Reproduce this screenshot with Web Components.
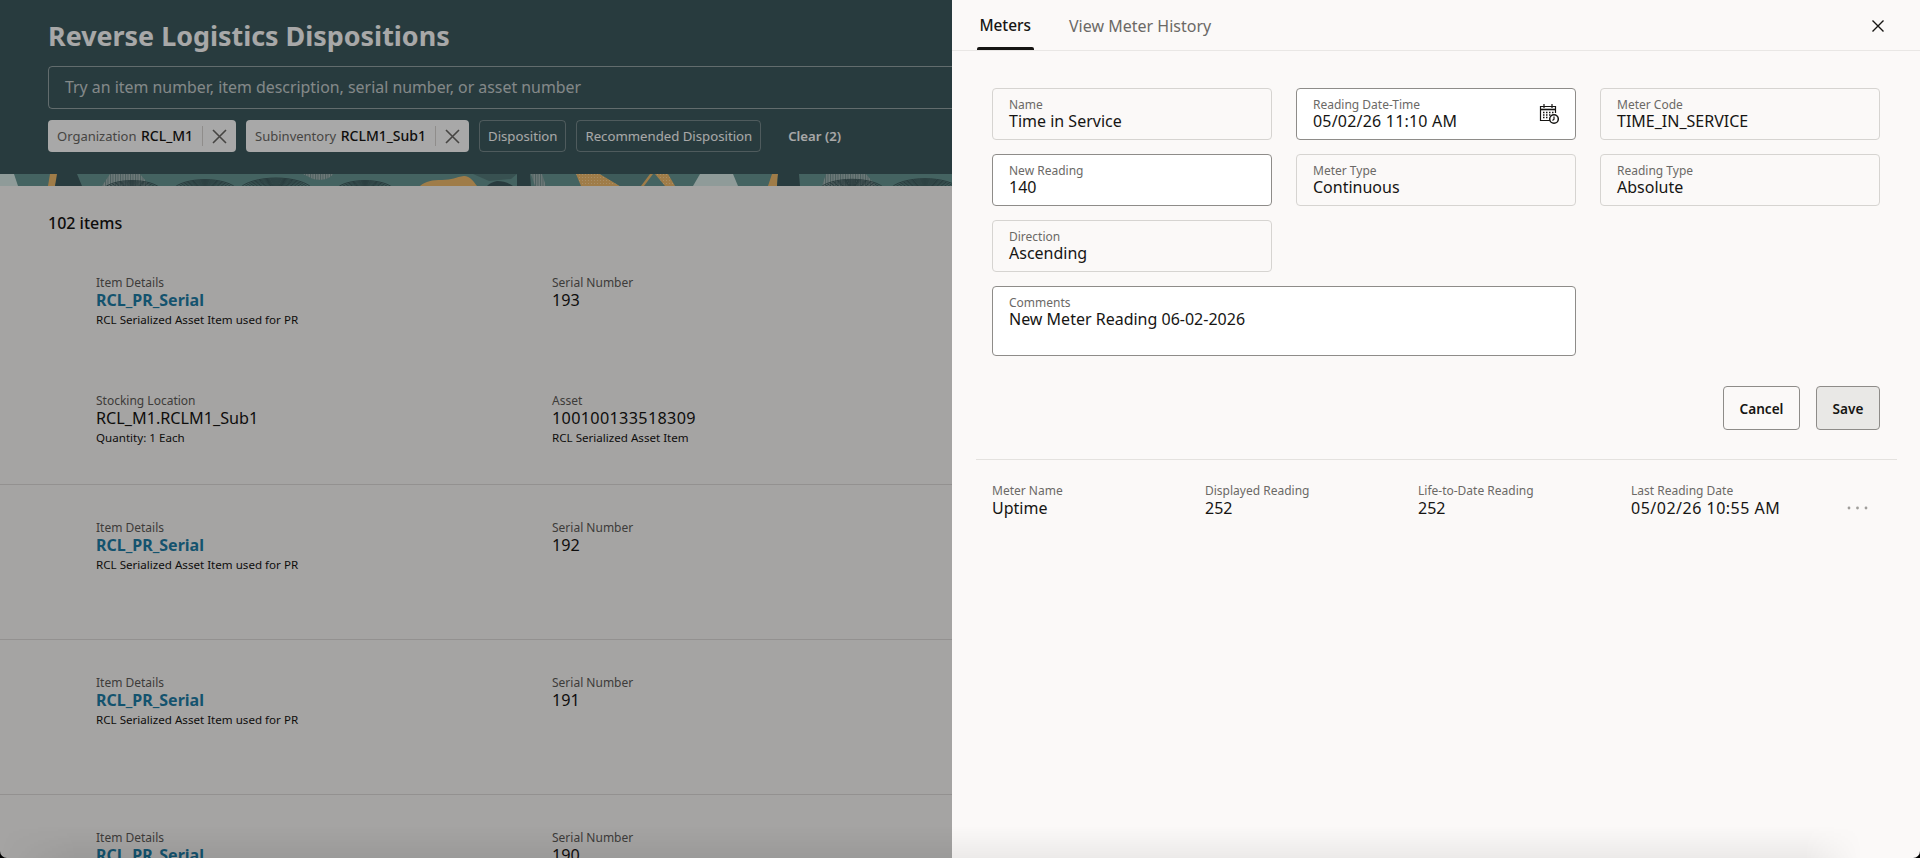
<!DOCTYPE html>
<html>
<head>
<meta charset="utf-8">
<title>Reverse Logistics Dispositions</title>
<style>
  html, body { margin: 0; height: 100%; overflow: hidden; }
  body { font-family: "Noto Sans", sans-serif; color: #161513; background: #fbf9f8; }
</style>
</head>
<body>
<rl-page></rl-page>
<rl-scrim></rl-scrim>
<rl-drawer></rl-drawer>
<rl-window-edge></rl-window-edge>

<script>
const FONT = '"Noto Sans", sans-serif';

class RlChip extends HTMLElement {
  connectedCallback() {
    this.attachShadow({ mode: 'open' });
    const label = this.getAttribute('label');
    const value = this.getAttribute('value');
    if (value) this.setAttribute('selected', '');
    this.shadowRoot.innerHTML = `
      <style>
        :host { display: inline-flex; align-items: center; height: 32px; box-sizing: border-box; border-radius: 4px; font-size: 13.2px; white-space: nowrap; padding-bottom: 1px; }
        :host([selected]) { background: #fff; padding-left: 9px; color: #161513; }
        :host(:not([selected])) { border: 1px solid rgba(255,255,255,.3); color: #fff; padding: 0 8px 1px; }
        .lab { color: #6b6966; margin-right: 4.5px; font-size: 13px; }
        .val { font-weight: 500; font-size: 14px; }
        .sep { width: 1px; height: 20px; background: #d9d7d4; margin: 1px 9px 0; }
        svg { display: block; margin: 1px 9px 0 0; }
      </style>
      ${value
        ? `<span class="lab">${label}</span><span class="val">${value}</span><span class="sep"></span>
           <svg width="15" height="15" viewBox="0 0 15 15" fill="none" stroke="#6b6966" stroke-width="1.6"><path d="M1 1l13 13M14 1L1 14"/></svg>`
        : `<span>${label}</span>`}
    `;
  }
}
customElements.define('rl-chip', RlChip);

// concentric finger print arcs of the banner art
function prints(cx, rx) {
  let d = '';
  for (let r = rx; r > 4; r -= 3.2) {
    d += `M${cx - r} 16C${cx - r * .7} ${16 - r * .42} ${cx + r * .7} ${16 - r * .42} ${cx + r} 16`;
  }
  return `<path d="${d}" fill="none" stroke="#3a5558" stroke-width=".9"/>`;
}

class RlBanner extends HTMLElement {
  connectedCallback() {
    this.attachShadow({ mode: 'open' });
    this.shadowRoot.innerHTML = `
      <style>
        :host { display: block; background: #3e5a5e; color: #fff; }
        .top { height: 174px; box-sizing: border-box; padding: 17px 0 0 48px; }
        h1 { margin: 0; font-size: 26.9px; line-height: 38px; font-weight: 700; }
        .search { margin-top: 11px; height: 43px; box-sizing: border-box; width: 1200px; border: 1px solid rgba(255,255,255,.45); border-radius: 4px; padding: 0 0 2px 16px; display: flex; align-items: center; font-size: 15.9px; color: rgba(255,255,255,.72); }
        .chips { margin-top: 11px; display: flex; gap: 10px; align-items: center; }
        .clear { margin-left: 17px; padding-bottom: 1px; font-size: 13.2px; font-weight: 600; color: #fff; }
        svg { display: block; }
      </style>
      <div class="top">
        <h1>Reverse Logistics Dispositions</h1>
        <div class="search">Try an item number, item description, serial number, or asset number</div>
        <div class="chips">
          <rl-chip label="Organization" value="RCL_M1"></rl-chip>
          <rl-chip label="Subinventory" value="RCLM1_Sub1"></rl-chip>
          <rl-chip label="Disposition"></rl-chip>
          <rl-chip label="Recommended Disposition"></rl-chip>
          <span class="clear">Clear (2)</span>
        </div>
      </div>
      <svg width="952" height="12" viewBox="0 0 952 12">
        <defs>
          <pattern id="hatch" width="2.5" height="3" patternUnits="userSpaceOnUse">
            <rect width="2.5" height="3" fill="#a9bab9"/><rect width="1" height="3" fill="#6f8f8e"/>
          </pattern>
          <pattern id="dots" width="3" height="3" patternUnits="userSpaceOnUse">
            <rect width="3" height="3" fill="#f2bd6e"/><rect width="1" height="1" fill="#ffd89c"/>
          </pattern>
        </defs>
        <rect width="952" height="12" fill="#689693"/>
        <path d="M0 0h14l4 12H0z" fill="#d9ebe8"/>
        <path d="M50 0h9l-4 12h-7z" fill="#f2bd6e"/>
        <path d="M57 0h20l5 12H55z" fill="#3e5a5e"/>
        <path d="M110 0h30l10 12h-48z" fill="url(#hatch)"/>
        ${prints(132, 30)}${prints(205, 33)}${prints(276, 38)}
        <path d="M303 0h30c-3 5-12 7-20 5z" fill="url(#hatch)"/>
        ${prints(365, 30)}
        <path d="M420 12c6-5 12-6 22-6 10 0 14-3 22-4 6 0 10 6 13 10z" fill="#f2bd6e"/>
        <path d="M473 0h44l-6 5-22 2z" fill="#557c7b"/>
        <path d="M487 12c3-3 6-4 10-5 6 0 12 2 16 5z" fill="#3e5a5e"/>
        <path d="M517 0h13l1 12h-14z" fill="#3e5a5e"/>
        <path d="M531 0h11l4 12h-11z" fill="url(#hatch)"/>
        <path d="M576 0h24l20 12h-39z" fill="url(#dots)"/>
        <path d="M600 0h50l-6 12h-24z" fill="#5f8b89"/>
        <path d="M650 0h3l-9 12h-3z" fill="#f2bd6e"/>
        <path d="M655 0h13l7 12h-10z" fill="url(#dots)"/>
        <path d="M700 0h33l5 12h-45z" fill="#d9ebe8"/>
        <path d="M772 0h6l-1 12h-9z" fill="#f2bd6e"/>
        <path d="M778 0h21l1 12h-23z" fill="#3e5a5e"/>
        <path d="M826 0h40l10 12h-54z" fill="url(#hatch)"/>
        ${prints(852, 34)}${prints(925, 36)}
      </svg>
    `;
  }
}
customElements.define('rl-banner', RlBanner);

class RlCell extends HTMLElement {
  connectedCallback() {
    this.attachShadow({ mode: 'open' });
    const link = this.hasAttribute('link');
    const sub = this.getAttribute('sub');
    this.shadowRoot.innerHTML = `
      <style>
        :host { display: block; }
        div { white-space: nowrap; }
        .l { font-size: 12px; line-height: 17px; color: #5e5c59; }
        .v { font-size: 16.2px; line-height: 19px; color: #161513; letter-spacing: var(--value-spacing, 0); }
        .v.link { font-size: 16px; font-weight: 700; color: #1f7fa8; }
        .s { font-size: 11.6px; line-height: 17px; margin-top: 1px; color: #161513; }
      </style>
      <div class="l">${this.getAttribute('label')}</div>
      <div class="v ${link ? 'link' : ''}">${this.getAttribute('value')}</div>
      ${sub ? `<div class="s">${sub}</div>` : ''}
    `;
  }
}
customElements.define('rl-cell', RlCell);

class RlItem extends HTMLElement {
  connectedCallback() {
    this.attachShadow({ mode: 'open' });
    const extra = this.hasAttribute('expanded');
    this.shadowRoot.innerHTML = `
      <style>
        :host { display: block; box-sizing: border-box; height: 155px; border-bottom: 1px solid #dfdddb; padding-top: 34px; }
        :host([expanded]) { height: 230px; padding-top: 19px; }
        .r { display: grid; grid-template-columns: 456px 1fr; padding-left: 96px; }
        .r + .r { margin-top: 64px; }
      </style>
      <div class="r">
        <rl-cell label="Item Details" value="RCL_PR_Serial" link sub="RCL Serialized Asset Item used for PR"></rl-cell>
        <rl-cell label="Serial Number" value="${this.getAttribute('serial')}"></rl-cell>
      </div>
      ${extra ? `<div class="r">
        <rl-cell label="Stocking Location" value="RCL_M1.RCLM1_Sub1" sub="Quantity: 1 Each"></rl-cell>
        <rl-cell label="Asset" value="100100133518309" sub="RCL Serialized Asset Item" style="--value-spacing:.33px"></rl-cell>
      </div>` : ''}
    `;
  }
}
customElements.define('rl-item', RlItem);

class RlPage extends HTMLElement {
  connectedCallback() {
    this.attachShadow({ mode: 'open' });
    this.shadowRoot.innerHTML = `
      <style>
        :host { display: block; height: 858px; overflow: hidden; background: #fbf9f8; }
        .count { padding: 26px 0 21px 48px; font-size: 16px; line-height: 22px; font-weight: 500; }
      </style>
      <rl-banner></rl-banner>
      <div class="count">102 items</div>
      <rl-item serial="193" expanded></rl-item>
      <rl-item serial="192"></rl-item>
      <rl-item serial="191"></rl-item>
      <rl-item serial="190"></rl-item>
    `;
  }
}
customElements.define('rl-page', RlPage);

class RlScrim extends HTMLElement {
  connectedCallback() {
    this.attachShadow({ mode: 'open' });
    this.shadowRoot.innerHTML = `
      <style>
        :host { display: block; position: fixed; inset: 0; background: rgba(0,0,0,.34); }
      </style>
    `;
  }
}
customElements.define('rl-scrim', RlScrim);

// rounded bottom of the window, with its soft shade
class RlWindowEdge extends HTMLElement {
  connectedCallback() {
    this.attachShadow({ mode: 'open' });
    this.shadowRoot.innerHTML = `
      <style>
        :host { display: block; position: fixed; inset: 0; overflow: hidden; pointer-events: none; }
        .round { position: absolute; inset: 0; border-radius: 0 0 7px 7px; box-shadow: 0 0 0 10px #000; }
        .shade { position: absolute; left: 0; right: 0; bottom: 0; height: 32px; background: linear-gradient(rgba(0,0,0,0), rgba(0,0,0,.06));
          -webkit-mask-image: linear-gradient(to right, transparent, #000 4%, #000 94%, transparent 97%); mask-image: linear-gradient(to right, transparent, #000 4%, #000 94%, transparent 97%); }
      </style>
      <div class="shade"></div>
      <div class="round"></div>
    `;
  }
}
customElements.define('rl-window-edge', RlWindowEdge);

class RlField extends HTMLElement {
  connectedCallback() {
    this.attachShadow({ mode: 'open' });
    this.shadowRoot.innerHTML = `
      <style>
        :host { display: block; box-sizing: border-box; height: 52px; border: 1px solid #d6d4d1; border-radius: 4px; padding: 8px 16px 0; position: relative; }
        :host([editable]) { background: #fff; border-color: #8e8c89; }
        :host([tall]) { height: 70px; }
        .l { font-size: 12px; line-height: 16px; color: #6b6966; }
        .v { font-size: 16px; line-height: 16px; color: #161513; letter-spacing: var(--value-spacing, 0); }
        ::slotted(svg) { position: absolute; right: 16px; top: 14px; }
      </style>
      <div class="l">${this.getAttribute('label')}</div>
      <div class="v">${this.getAttribute('value')}</div>
      <slot></slot>
    `;
  }
}
customElements.define('rl-field', RlField);

class RlButton extends HTMLElement {
  connectedCallback() {
    this.attachShadow({ mode: 'open' });
    this.shadowRoot.innerHTML = `
      <style>
        :host { display: flex; align-items: center; justify-content: center; box-sizing: border-box; height: 44px; border: 1px solid #8e8c89; border-radius: 4px; font-size: 13.6px; font-weight: 600; color: #161513; }
        :host([primary]) { background: #e9e8e6; }
      </style>
      <slot></slot>
    `;
  }
}
customElements.define('rl-button', RlButton);

class RlMeterRow extends HTMLElement {
  connectedCallback() {
    this.attachShadow({ mode: 'open' });
    const cols = JSON.parse(this.getAttribute('cols'));
    this.shadowRoot.innerHTML = `
      <style>
        :host { display: grid; grid-template-columns: repeat(4, 213px) 1fr; align-items: center; padding-left: 16px; }
        .l { font-size: 12px; line-height: 17px; color: #6b6966; white-space: nowrap; }
        .v { font-size: 16px; line-height: 19px; color: #161513; white-space: nowrap; }
        .v.date { letter-spacing: .5px; }
        svg { display: block; margin: 15px 0 0 3px; }
      </style>
      ${cols.map((c, i) => `<div><div class="l">${c[0]}</div><div class="v ${i == 3 ? 'date' : ''}">${c[1]}</div></div>`).join('')}
      <svg width="21" height="4" viewBox="0 0 21 4" fill="#a09e9b"><circle cx="2" cy="2" r="1.4"/><circle cx="10.500" cy="2" r="1.4"/><circle cx="19" cy="2" r="1.4"/></svg>
    `;
  }
}
customElements.define('rl-meter-row', RlMeterRow);

class RlDrawer extends HTMLElement {
  connectedCallback() {
    this.attachShadow({ mode: 'open' });
    this.shadowRoot.innerHTML = `
      <style>
        :host { display: block; position: fixed; top: 0; right: 0; bottom: 0; width: 968px; box-sizing: border-box; background: #fbf9f8; color: #161513; font-family: ${FONT}; }
        .tabs { height: 51px; box-sizing: border-box; border-bottom: 1px solid #e9e7e5; display: flex; padding-left: 25px; position: relative; }
        .tab { height: 50px; display: flex; align-items: center; padding-top: 2px; font-size: 16px; color: #6b6966; box-sizing: border-box; white-space: nowrap; }
        .tab.on { position: relative; width: 56.5px; justify-content: center; margin-right: 35.5px; padding-top: 1px; color: #161513; font-size: 15.4px; font-weight: 500; }
        .tab.on::after { content: ""; position: absolute; left: 0; right: 0; bottom: 0; height: 3px; background: #161513; border-radius: 2px 2px 0 0; }
        .close { position: absolute; right: 35px; top: 19px; display: block; }
        .form { padding: 37px 40px 0; display: grid; grid-template-columns: repeat(3, 280px); gap: 14px 24px; }
        .actions { display: flex; justify-content: flex-end; gap: 16px; padding: 30px 40px 0 0; }
        .divider { margin: 29px 23px 0 24px; height: 1px; background: #e4e2df; }
        .meters { padding: 22px 24px 0 24px; }
      </style>
      <div class="tabs">
        <div class="tab on">Meters</div>
        <div class="tab">View Meter History</div>
        <svg class="close" width="14" height="14" viewBox="0 0 14 14" fill="none" stroke="#161513" stroke-width="1.4"><path d="M1.500 1.500l11 11M12.500 1.500l-11 11"/></svg>
      </div>
      <div class="form">
        <rl-field label="Name" value="Time in Service"></rl-field>
        <rl-field editable label="Reading Date-Time" value="05/02/26 11:10 AM" style="--value-spacing:.2px">
          <svg width="20" height="22" viewBox="0 0 20 22" fill="none" stroke="#161513" stroke-width="1.2">
            <path d="M11 17.500H1.500V3.500h15V10"/>
            <path d="M1.500 6.500h15" stroke-width="1.600"/>
            <path d="M5 1v4M13 1v4"/>
            <path d="M4 9.500h1.500M7 9.500h1.500M10 9.500h1.500M13 9.500h1.500M4 12h1.500M7 12h1.500M10 12h1.500M4 14.500h1.500M7 14.500h1.500" stroke-width="1.400"/>
            <circle cx="15" cy="16" r="4.300" fill="#fff" stroke-width="1.500"/>
            <path d="M15 13.500V16.300l-1.500 1.200"/>
          </svg>
        </rl-field>
        <rl-field label="Meter Code" value="TIME_IN_SERVICE"></rl-field>
        <rl-field editable label="New Reading" value="140"></rl-field>
        <rl-field label="Meter Type" value="Continuous"></rl-field>
        <rl-field label="Reading Type" value="Absolute"></rl-field>
        <rl-field label="Direction" value="Ascending" style="grid-column: 1"></rl-field>
        <rl-field editable tall label="Comments" value="New Meter Reading 06-02-2026" style="grid-column: 1 / span 2"></rl-field>
      </div>
      <div class="actions">
        <rl-button style="width:77px">Cancel</rl-button>
        <rl-button primary style="width:64px">Save</rl-button>
      </div>
      <div class="divider"></div>
      <div class="meters">
        <rl-meter-row cols='[["Meter Name","Uptime"],["Displayed Reading","252"],["Life-to-Date Reading","252"],["Last Reading Date","05/02/26 10:55 AM"]]'></rl-meter-row>
      </div>
    `;
  }
}
customElements.define('rl-drawer', RlDrawer);
</script>
</body>
</html>
